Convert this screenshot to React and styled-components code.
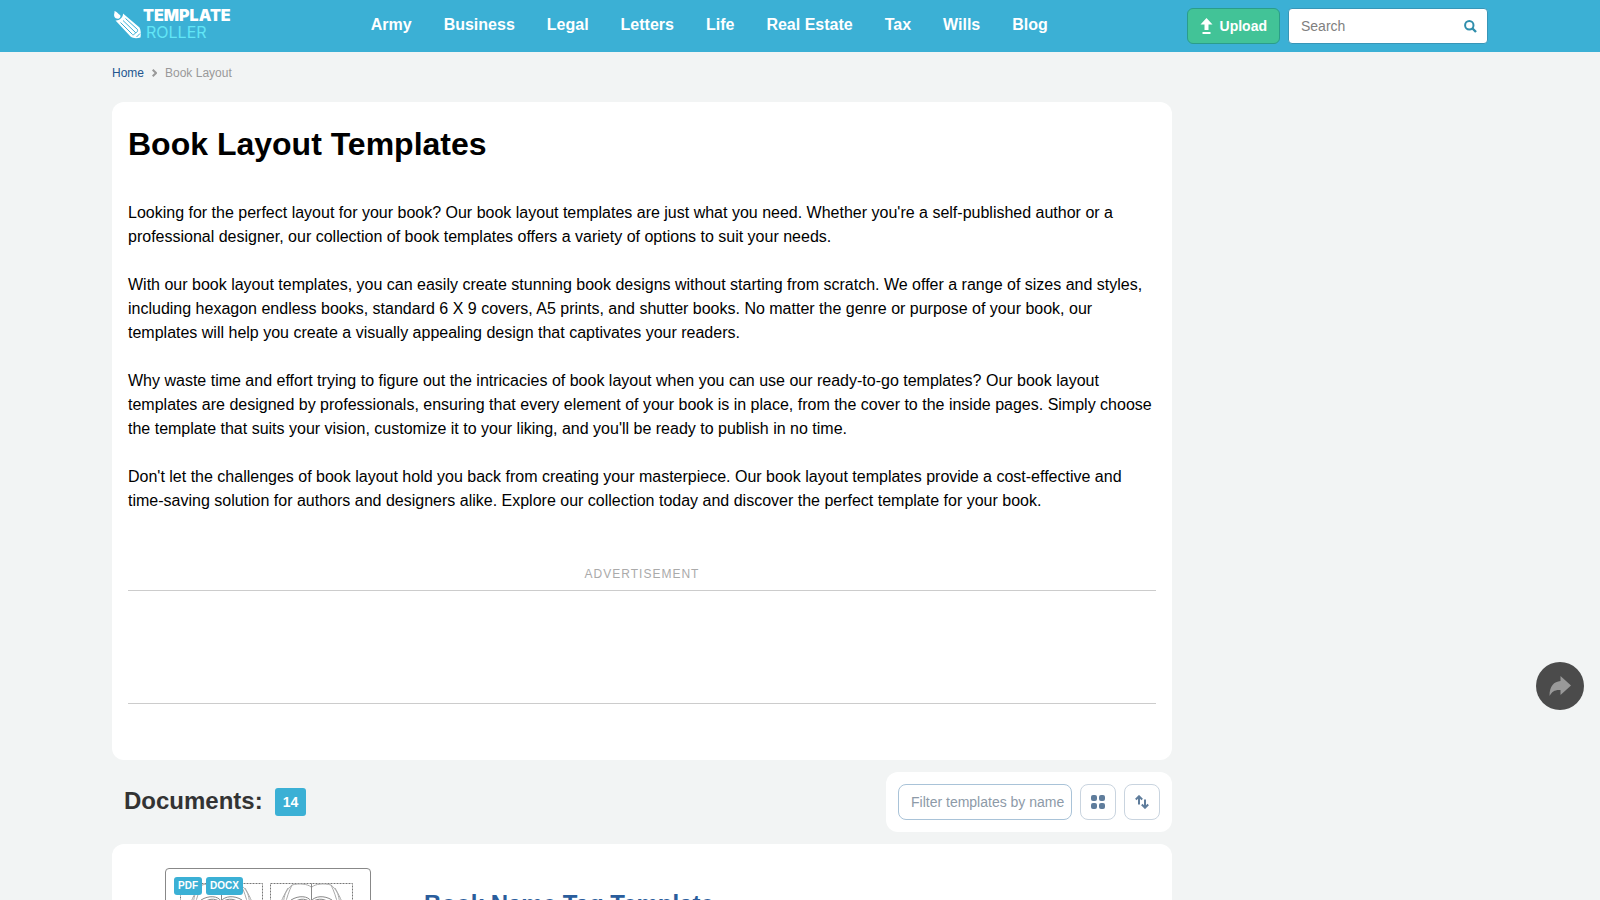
import React from "react";
import styled, { createGlobalStyle } from "styled-components";

const blue = "#3bb0d5";

const GlobalStyle = createGlobalStyle`
  *, *::before, *::after { box-sizing: border-box; }
  body {
    margin: 0;
    background: #f2f4f4;
    color: #000;
    font: 16px/24px "Liberation Sans", Arial, sans-serif;
  }
  h1, h2, h3, p { margin: 0; }
  a { text-decoration: none; }
  svg { display: block; flex: none; }
`;

const Container = styled.div`
  max-width: 1400px;
  margin: 0 auto;
  padding: 0 12px;
`;

const Header = styled.header`
  background: ${blue};
`;

const HeaderRow = styled(Container)`
  display: flex;
  align-items: center;
  justify-content: space-between;
  height: 52px;
`;

const Logo = styled.a`
  display: flex;
  align-items: center;
  gap: 2px;
  width: 120px;
  padding-bottom: 4px;
  color: #fff;
  white-space: nowrap;
`;

const LogoText = styled.span`
  display: flex;
  flex-direction: column;
  font: 900 16px/16px Inter, "Liberation Sans", sans-serif;
`;

const LogoName = styled.span`
  display: block;
`;

const LogoSub = styled.span`
  display: block;
  padding-left: 3px;
  font-weight: 400;
  line-height: 18px;
  color: #62e6f5;
`;

const Nav = styled.nav`
  display: flex;
  gap: 32px;
  padding-bottom: 3px;
`;

const NavLink = styled.a`
  color: #fff;
  font-weight: 700;
  white-space: nowrap;
`;

const Actions = styled.div`
  display: flex;
  gap: 8px;
`;

const UploadButton = styled.button`
  display: flex;
  align-items: center;
  gap: 7px;
  height: 36px;
  padding: 0 12px;
  border: 1px solid #2a9d8a;
  border-radius: 6px;
  background: #42c397;
  color: #fff;
  font: 700 14px/16px "Liberation Sans", Arial, sans-serif;
`;

const SearchBox = styled.form`
  display: flex;
  align-items: center;
  width: 200px;
  height: 36px;
  padding: 0 10px 0 12px;
  border: 1px solid #3796b8;
  border-radius: 4px;
  background: #fff;
`;

const SearchInput = styled.input`
  flex: 1;
  min-width: 0;
  padding: 0;
  border: 0;
  outline: 0;
  background: none;
  font: 14px/16px "Liberation Sans", Arial, sans-serif;
  &::placeholder { color: #808080; }
`;

const IconButton = styled.button`
  padding: 0;
  border: 0;
  background: none;
`;

const Crumbs = styled.nav`
  display: flex;
  align-items: center;
  gap: 8px;
  padding: 13px 0 21px;
  font-size: 12px;
  line-height: 16px;
  color: #999;
`;

const CrumbLink = styled.a`
  color: #24568f;
`;

const Columns = styled(Container)`
  display: grid;
  grid-template-columns: minmax(0, 1fr) 300px;
  column-gap: 16px;
`;

const Main = styled.main`
  display: flex;
  flex-direction: column;
  gap: 12px;
`;

const Card = styled.section`
  border-radius: 12px;
  background: #fff;
`;

const Intro = styled(Card)`
  padding: 24px 16px 56px;
`;

const Title = styled.h1`
  margin-bottom: 39px;
  font-size: 32px;
  line-height: 36px;
`;

const Paragraph = styled.p`
  margin-bottom: 24px;
`;

const AdLabel = styled.div`
  margin-top: 53px;
  padding-bottom: 8px;
  text-align: center;
  text-transform: uppercase;
  font-size: 12px;
  line-height: 16px;
  letter-spacing: 1px;
  color: #aaa;
`;

const AdSlot = styled.div`
  height: 114px;
  border: solid #ccc;
  border-width: 1px 0;
`;

const DocsBar = styled.div`
  display: flex;
  align-items: center;
  justify-content: space-between;
  padding-left: 12px;
`;

const DocsHeading = styled.div`
  display: flex;
  align-items: center;
  gap: 12px;
`;

const DocsTitle = styled.h2`
  padding-bottom: 2px;
  font-size: 24px;
  line-height: 32px;
  color: #333;
`;

const Count = styled.span`
  padding: 6px 8px;
  border-radius: 3px;
  background: ${blue};
  color: #fff;
  font-size: 14px;
  font-weight: 700;
  line-height: 16px;
`;

const Filters = styled(Card)`
  display: flex;
  gap: 8px;
  padding: 12px;
`;

const FilterInput = styled.input`
  width: 174px;
  height: 36px;
  padding: 0 0 0 12px;
  border: 1px solid #a9c3d8;
  border-radius: 8px;
  background: #fff;
  font: 14px/16px "Liberation Sans", Arial, sans-serif;
  &::placeholder { color: #8d9aa8; }
`;

const ToolButton = styled.button`
  display: grid;
  place-items: center;
  width: 36px;
  height: 36px;
  padding: 0;
  border: 1px solid #c9d4df;
  border-radius: 8px;
  background: #fff;
  color: #5f7d9c;
`;

const DocumentCard = styled(Card)`
  display: flex;
  gap: 53px;
  padding: 24px 16px 24px 53px;
`;

const Thumb = styled.a`
  position: relative;
  border: 1px solid #888;
  border-radius: 4px;
  overflow: hidden;
`;

const Badges = styled.div`
  position: absolute;
  top: 8px;
  left: 8px;
  display: flex;
  gap: 4px;
`;

const Badge = styled.span`
  padding: 1px 4px;
  border-radius: 3px;
  background: ${blue};
  color: #fff;
  font-size: 10px;
  font-weight: 700;
  line-height: 16px;
`;

const DocumentTitle = styled.h3`
  padding-top: 20px;
  font-size: 24px;
  line-height: 32px;
  a { color: #2a5d9c; }
`;

const ShareButton = styled.button`
  position: fixed;
  right: 16px;
  bottom: 190px;
  display: grid;
  place-items: center;
  width: 48px;
  height: 48px;
  padding: 0;
  border: 0;
  border-radius: 50%;
  background: #4b4b4b;
  color: #999;
`;

const PencilLogo = () => (
  <svg width="29" height="30" viewBox="0 0 29 30" fill="none" aria-hidden="true">
    <path d="M2.500 2C5 2.500 6 5 8 6C9 7 8.500 8.500 7 9.500C5.500 10 3 9.500 2.300 7.500C1.600 5.500 2.800 4 2.500 2Z" fill="#fff" />
    <path d="M3.500 11.500C7 12 11.500 8 11 4.500L27.500 18.500C29 21 29 25 28.500 28.500C25 29.500 21 29.500 18.500 27.500Z" fill="#fff" />
    <path d="M8.500 13.500L20.500 25.500M11 11.500L23.500 23.500M13.500 9.500L25.500 20.500" stroke={blue} strokeWidth="1" />
    <path d="M20.500 25.800C22 26 23 25 23 23.800C25 24 26 22 25.500 20.500M24.500 28L28 24.500" stroke={blue} strokeWidth="1" />
  </svg>
);

const OpenBook = ({ x }) => (
  <g transform={`translate(${x} 0)`} fill="none" stroke="#aaa">
    <rect x="0.500" y="14.500" width="82" height="110" stroke="#777" strokeDasharray="2 1" />
    <path d="M41.500 14.500V34" stroke="#888" />
    <path d="M41 18C38 15 29 14 22 16C17 20 13 27 10 36M42 18C45 15 54 14 61 16C66 20 70 27 73 36" />
    <path d="M22 16C19 22 17 28 15 36M61 16C64 22 66 28 68 36M18 19C15 24 14 28 13 36M65 19C68 24 69 28 70 36" />
    <path d="M21 31C29 26 38 27 41 32C45 27 54 26 62 31M23 34C30 28 38 30 41 34C45 30 53 28 60 34" stroke="#888" />
    <path d="M10 36L14 100H69L73 36" />
  </g>
);

const nav = ["Army", "Business", "Legal", "Letters", "Life", "Real Estate", "Tax", "Wills", "Blog"];

const paragraphs = [
  "Looking for the perfect layout for your book? Our book layout templates are just what you need. Whether you're a self-published author or a professional designer, our collection of book templates offers a variety of options to suit your needs.",
  "With our book layout templates, you can easily create stunning book designs without starting from scratch. We offer a range of sizes and styles, including hexagon endless books, standard 6 X 9 covers, A5 prints, and shutter books. No matter the genre or purpose of your book, our templates will help you create a visually appealing design that captivates your readers.",
  "Why waste time and effort trying to figure out the intricacies of book layout when you can use our ready-to-go templates? Our book layout templates are designed by professionals, ensuring that every element of your book is in place, from the cover to the inside pages. Simply choose the template that suits your vision, customize it to your liking, and you'll be ready to publish in no time.",
  "Don't let the challenges of book layout hold you back from creating your masterpiece. Our book layout templates provide a cost-effective and time-saving solution for authors and designers alike. Explore our collection today and discover the perfect template for your book.",
];

export default function App() {
  return (
    <>
      <GlobalStyle />
      <Header>
        <HeaderRow>
          <Logo href="#">
            <PencilLogo />
            <LogoText>
              <LogoName>TEMPLATE</LogoName>
              <LogoSub>ROLLER</LogoSub>
            </LogoText>
          </Logo>
          <Nav>
            {nav.map((label) => (
              <NavLink href="#" key={label}>{label}</NavLink>
            ))}
          </Nav>
          <Actions>
            <UploadButton type="button">
              <svg width="13" height="16" viewBox="0 0 13 16" fill="currentColor" aria-hidden="true">
                <path d="M6.500 0L12.500 6.500H8.500V12H4.500V6.500H0.500ZM2.500 14H10.500V16H2.500Z" />
              </svg>
              Upload
            </UploadButton>
            <SearchBox role="search">
              <SearchInput type="search" placeholder="Search" aria-label="Search" />
              <IconButton type="button" aria-label="Submit search">
                <svg width="13" height="13" viewBox="0 0 13 13" fill="none" stroke="#2f8eac" aria-hidden="true">
                  <circle cx="5.300" cy="5.300" r="4.200" strokeWidth="2" />
                  <path d="M8.500 8.500L12 12" strokeWidth="2.400" />
                </svg>
              </IconButton>
            </SearchBox>
          </Actions>
        </HeaderRow>
      </Header>

      <Container>
        <Crumbs aria-label="Breadcrumb">
          <CrumbLink href="#">Home</CrumbLink>
          <svg width="5" height="8" viewBox="0 0 5 8" fill="none" stroke="#999" strokeWidth="2" aria-hidden="true">
            <path d="M0.700 0.700L4 4L0.700 7.300" />
          </svg>
          <span>Book Layout</span>
        </Crumbs>
      </Container>

      <Columns>
        <Main>
          <Intro>
            <Title>Book Layout Templates</Title>
            {paragraphs.map((text) => (
              <Paragraph key={text}>{text}</Paragraph>
            ))}
            <AdLabel>Advertisement</AdLabel>
            <AdSlot />
          </Intro>

          <DocsBar>
            <DocsHeading>
              <DocsTitle>Documents:</DocsTitle>
              <Count>14</Count>
            </DocsHeading>
            <Filters>
              <FilterInput type="text" placeholder="Filter templates by name" aria-label="Filter templates by name" />
              <ToolButton type="button" aria-label="Grid view">
                <svg width="14" height="14" viewBox="0 0 14 14" fill="currentColor" aria-hidden="true">
                  <rect width="6" height="6" rx="2" />
                  <rect x="8" width="6" height="6" rx="2" />
                  <rect y="8" width="6" height="6" rx="2" />
                  <rect x="8" y="8" width="6" height="6" rx="2" />
                </svg>
              </ToolButton>
              <ToolButton type="button" aria-label="Sort">
                <svg width="14" height="14" viewBox="0 0 14 14" fill="none" stroke="currentColor" strokeWidth="2" aria-hidden="true">
                  <path d="M4 9.500V2M0.800 4.500L4 1.300L7.200 4.500M10 4.500V12M6.800 9.500L10 12.700L13.200 9.500" />
                </svg>
              </ToolButton>
            </Filters>
          </DocsBar>

          <DocumentCard>
            <Thumb href="#" aria-label="Book Name Tag Template preview">
              <svg width="204" height="140" viewBox="0 0 204 140" aria-hidden="true">
                <OpenBook x={14} />
                <OpenBook x={104} />
              </svg>
              <Badges>
                <Badge>PDF</Badge>
                <Badge>DOCX</Badge>
              </Badges>
            </Thumb>
            <DocumentTitle>
              <a href="#">Book Name Tag Template</a>
            </DocumentTitle>
          </DocumentCard>
        </Main>
      </Columns>

      <ShareButton type="button" aria-label="Share">
        <svg width="22" height="20" viewBox="0 0 22 20" fill="currentColor" aria-hidden="true">
          <path d="M11.500 0L22 9.500L11.500 19V14C6 13.500 3 15.500 0.500 20C0.500 10 5 5.500 11.500 5Z" />
        </svg>
      </ShareButton>
    </>
  );
}
